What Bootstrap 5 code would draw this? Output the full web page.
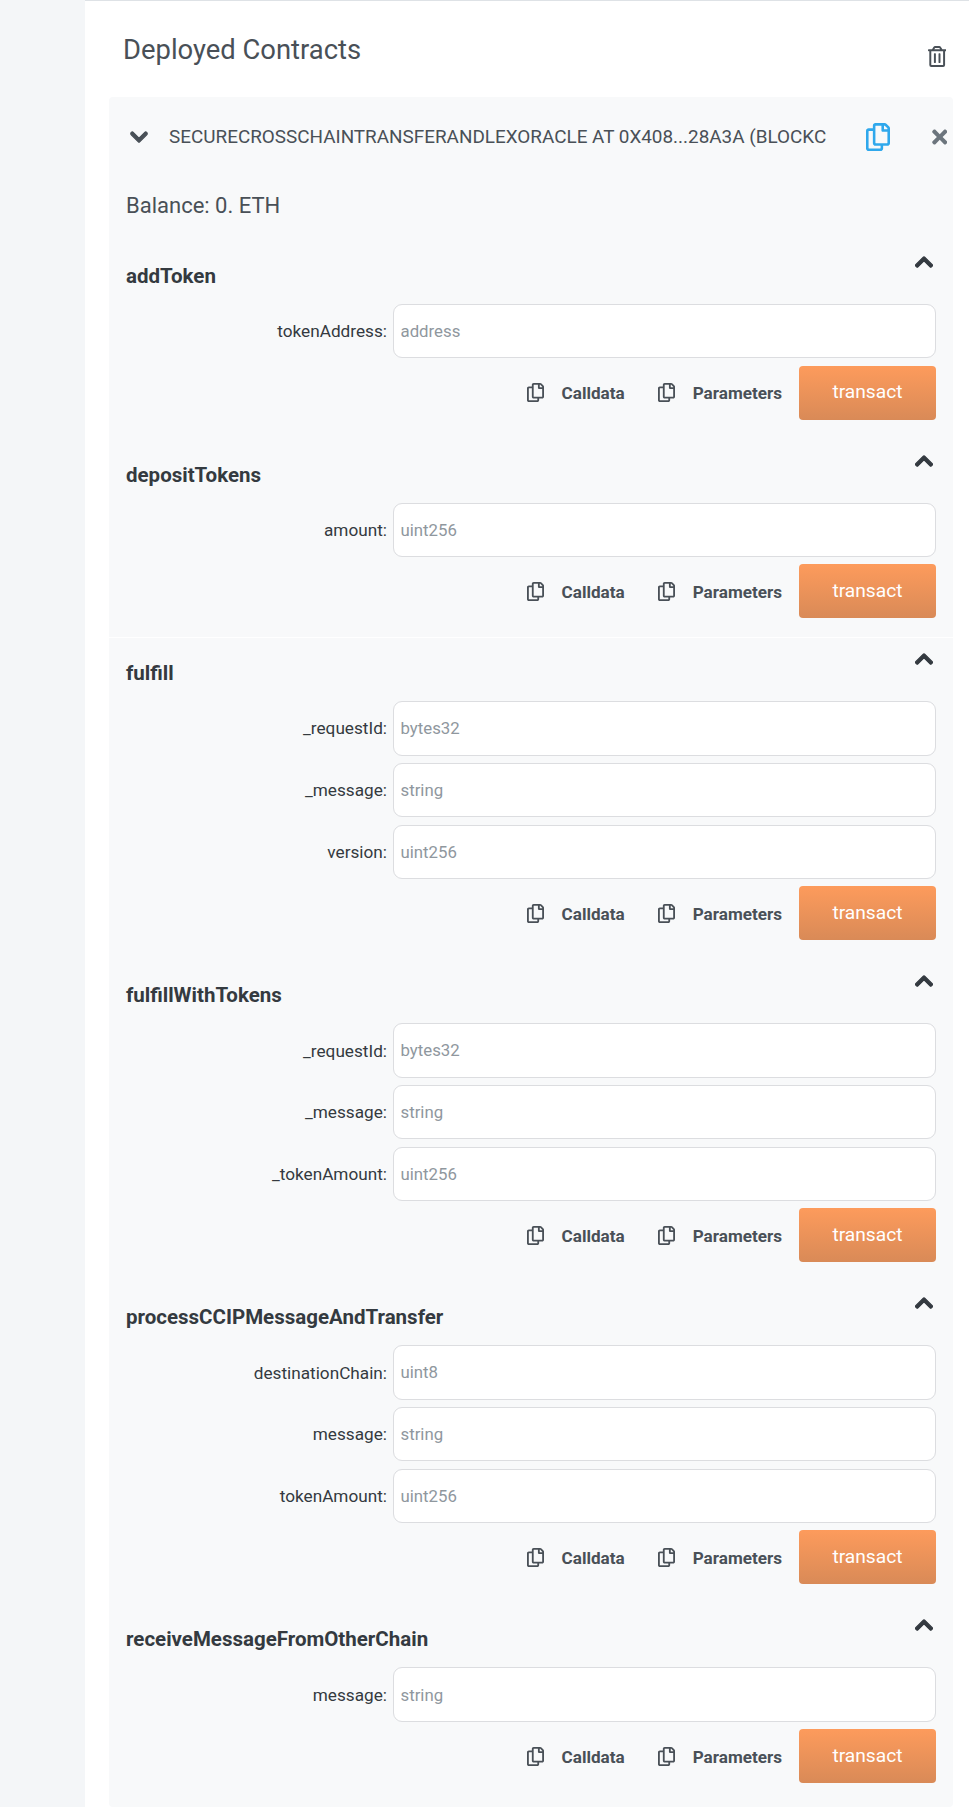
<!DOCTYPE html>
<html lang="en">
<head>
    <meta charset="UTF-8">
    <meta name="viewport" content="width=device-width, initial-scale=1.0">
    <title>Deployed Contracts</title>
    <link href="https://cdn.jsdelivr.net/npm/bootstrap@5.3.0/dist/css/bootstrap.min.css" rel="stylesheet">
    <style>
        html, body { height: 100%; }
        body { background: #f4f6f8; font-family: Roboto, "Liberation Sans", sans-serif; color: #495057; overflow: hidden; }
        .panel-main { margin-left: 85px; background: #fff; border-top: 1px solid #dee2e6; height: 1807px; padding: 0 16px 0 24px; }
        .panel-head { height: 96px; padding: 30px 7px 0 14px; }
        .panel-title { font-size: 27.4px; line-height: 38px; font-weight: 400; margin: 0; color: #495057; }
        .trash-icon { width: 18.4px; height: 21px; margin-top: 15px; fill: #495057; }
        .deployed { background: #f8f9fa; border-radius: 4px; height: 1710px; overflow: hidden; }
        .deployed-head { height: 80px; padding: 0 6px 0 21px; }
        .instance-name { width: 660px; margin-left: 21px; font-size: 18.9px; white-space: nowrap; overflow: hidden; text-transform: uppercase; color: #495057; }
        .chev-down { width: 18px; height: 20px; fill: #495057; stroke: #495057; stroke-width: 30px; }
        .blue-copy { width: 24px; height: 28px; fill: #2fa8ec; margin-left: 37px; }
        .x-icon { width: 15.5px; height: 22px; fill: #6c757d; margin-left: auto; }
        .balance { font-size: 22px; line-height: 30px; margin: 14px 0 0 17px; height: 56px; }
        .fn-block { padding: 13px 17px 0 17px; }
        .fn-block.first-fn { padding-top: 0; }
        .fn-block.has-line { border-top: 1px solid #fff; margin-top: 18.4px; padding-top: 6.4px; }
        .fn-title { height: 57px; }
        .fn-title h6 { font-size: 20.5px; font-weight: 700; line-height: 28px; margin: 15px 0 0; color: #343a40; }
        .chev-up { width: 18px; height: 20px; fill: #343a40; stroke: #343a40; stroke-width: 30px; margin-top: 5px; margin-right: 3px; }
        .arg-row { height: 54.4px; margin-bottom: 7.3px; }
        .arg-row label { font-size: 17.2px; color: #343a40; margin: 0 6px 0 0; padding-top: 2px; }
        .arg-input { width: 543px; height: 54.4px; flex: none; border: 1px solid #dcdde0; border-radius: 9px; font-size: 16.8px; padding: 0 6.5px; color: #495057; }
        .arg-input::placeholder { color: #8f979e; }
        .arg-input:focus { box-shadow: none; border-color: #dcdde0; }
        .act-row { height: 54px; margin-bottom: 13px; }
        .copy-link { font-size: 17.1px; font-weight: 700; color: #495057; }
        .copy-link span { padding-top: 3px; }
        .copy-link svg { width: 17px; height: 19px; fill: #495057; margin-right: 18px; }
        .copy-link.calldata { margin-right: 33px; }
        .copy-link.params { margin-right: 17px; }
        .btn-transact { width: 137px; height: 54px; background: linear-gradient(#fd9b5c, #d98a57); border: 0; border-radius: 4px; color: #fff; font-size: 19.2px; padding: 0; }
    </style>
</head>
<body>
    <svg class="d-none">
        <symbol id="i-copy" viewBox="0 0 448 512" preserveAspectRatio="none"><path d="M433.941 65.941l-51.882-51.882A48 48 0 0 0 348.118 0H176c-26.51 0-48 21.49-48 48v48H48c-26.51 0-48 21.49-48 48v320c0 26.51 21.49 48 48 48h224c26.51 0 48-21.49 48-48v-48h80c26.51 0 48-21.49 48-48V99.882a48 48 0 0 0-14.059-33.941zM266 464H54a6 6 0 0 1-6-6V150a6 6 0 0 1 6-6h74v224c0 26.51 21.49 48 48 48h96v42a6 6 0 0 1-6 6zm128-96H182a6 6 0 0 1-6-6V54a6 6 0 0 1 6-6h106v88c0 13.255 10.745 24 24 24h88v202a6 6 0 0 1-6 6zm6-256h-64V48h9.632c1.591 0 3.117.632 4.243 1.757l48.368 48.368a6 6 0 0 1 1.757 4.243V112z"/></symbol>
        <symbol id="i-up" viewBox="0 0 448 512"><path d="M240.971 130.524l194.343 194.343c9.373 9.373 9.373 24.569 0 33.941l-22.667 22.667c-9.357 9.357-24.522 9.375-33.901.04L224 227.495 69.255 381.516c-9.379 9.335-24.544 9.317-33.901-.04l-22.667-22.667c-9.373-9.373-9.373-24.569 0-33.941L207.03 130.525c9.372-9.373 24.568-9.373 33.941-.001z"/></symbol>
    </svg>

    <div class="panel-main">
        <div class="panel-head d-flex justify-content-between align-items-start">
            <h5 class="panel-title">Deployed Contracts</h5>
            <svg class="trash-icon" viewBox="0 0 448 512" preserveAspectRatio="none"><path d="M268 416h24a12 12 0 0 0 12-12V188a12 12 0 0 0-12-12h-24a12 12 0 0 0-12 12v216a12 12 0 0 0 12 12zM432 80h-82.41l-34-56.7A48 48 0 0 0 274.41 0H173.59a48 48 0 0 0-41.16 23.3L98.41 80H16A16 16 0 0 0 0 96v16a16 16 0 0 0 16 16h16v336a48 48 0 0 0 48 48h288a48 48 0 0 0 48-48V128h16a16 16 0 0 0 16-16V96a16 16 0 0 0-16-16zM171.84 50.91A6 6 0 0 1 177 48h94a6 6 0 0 1 5.15 2.91L293.61 80H154.39zM368 464H80V128h288zm-212-48h24a12 12 0 0 0 12-12V188a12 12 0 0 0-12-12h-24a12 12 0 0 0-12 12v216a12 12 0 0 0 12 12z"/></svg>
        </div>

        <div class="deployed">
            <div class="deployed-head d-flex align-items-center">
                <svg class="chev-down" viewBox="0 0 448 512"><use href="#i-up" transform="rotate(180 224 256)"/></svg>
                <div class="instance-name">SecureCrossChainTransferAndLExOracle at 0x408...28A3A (blockc</div>
                <svg class="blue-copy"><use href="#i-copy"/></svg>
                <svg class="x-icon" viewBox="0 0 352 512"><path d="M242.72 256l100.07-100.07c12.28-12.28 12.28-32.19 0-44.48l-22.24-22.24c-12.28-12.28-32.19-12.28-44.48 0L176 189.28 75.93 89.21c-12.28-12.28-32.19-12.28-44.48 0L9.21 111.45c-12.28 12.28-12.28 32.19 0 44.48L109.28 256 9.21 356.07c-12.28 12.28-12.28 32.19 0 44.48l22.24 22.24c12.28 12.28 32.2 12.28 44.48 0L176 322.72l100.07 100.07c12.28 12.28 32.2 12.28 44.48 0l22.24-22.24c12.28-12.28 12.28-32.19 0-44.48L242.72 256z"/></svg>
            </div>
            <div class="balance">Balance: 0. ETH</div>
            <div id="fnList"></div>
        </div>
    </div>

    <script>
        const fns = [
            ['addToken', [['tokenAddress', 'address']]],
            ['depositTokens', [['amount', 'uint256']]],
            ['fulfill', [['_requestId', 'bytes32'], ['_message', 'string'], ['version', 'uint256']]],
            ['fulfillWithTokens', [['_requestId', 'bytes32'], ['_message', 'string'], ['_tokenAmount', 'uint256']]],
            ['processCCIPMessageAndTransfer', [['destinationChain', 'uint8'], ['message', 'string'], ['tokenAmount', 'uint256']]],
            ['receiveMessageFromOtherChain', [['message', 'string']]]
        ];

        const list = document.getElementById('fnList');
        fns.forEach(function(fn, i) {
            const rows = fn[1].map(function(arg) {
                return `<div class="arg-row d-flex align-items-center justify-content-end">
                    <label>${arg[0]}:</label>
                    <input type="text" class="form-control arg-input" placeholder="${arg[1]}">
                </div>`;
            }).join('');
            const div = document.createElement('div');
            div.className = 'fn-block' + (i === 0 ? ' first-fn' : '') + (i === 2 ? ' has-line' : '');
            div.innerHTML = `
                <div class="fn-title d-flex justify-content-between align-items-start">
                    <h6>${fn[0]}</h6>
                    <svg class="chev-up"><use href="#i-up"/></svg>
                </div>
                ${rows}
                <div class="act-row d-flex align-items-center justify-content-end">
                    <div class="copy-link calldata d-flex align-items-center"><svg><use href="#i-copy"/></svg><span>Calldata</span></div>
                    <div class="copy-link params d-flex align-items-center"><svg><use href="#i-copy"/></svg><span>Parameters</span></div>
                    <button class="btn btn-transact">transact</button>
                </div>`;
            list.appendChild(div);
        });
    </script>

    <script src="https://cdn.jsdelivr.net/npm/bootstrap@5.3.0/dist/js/bootstrap.bundle.min.js"></script>
</body>
</html>
